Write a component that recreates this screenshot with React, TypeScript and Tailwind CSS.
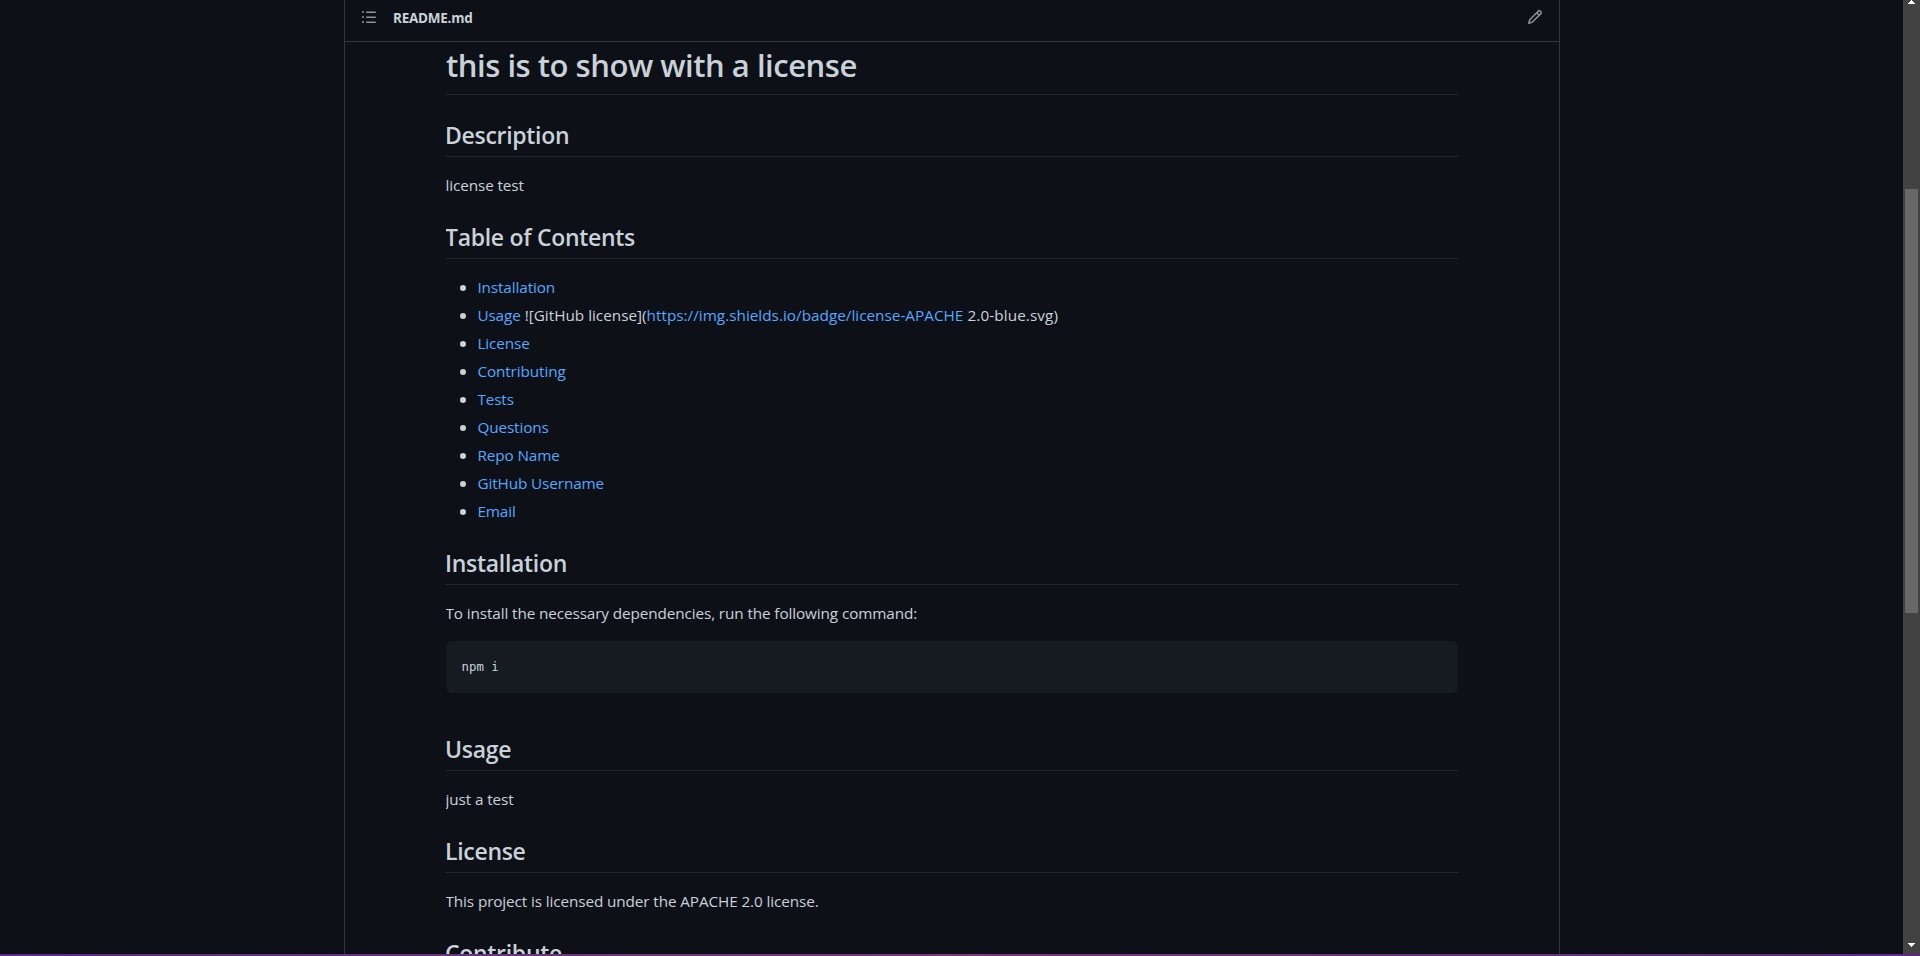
import type { ReactNode } from "react";

function ListIcon() {
  return (
    <svg className="size-4 shrink-0 fill-[#8b949e]" viewBox="0 0 16 16">
      <path d="M5.75 2.5h8.5a.75.75 0 0 1 0 1.5h-8.5a.75.75 0 0 1 0-1.5Zm0 5h8.5a.75.75 0 0 1 0 1.5h-8.5a.75.75 0 0 1 0-1.5Zm0 5h8.5a.75.75 0 0 1 0 1.5h-8.5a.75.75 0 0 1 0-1.5ZM2 14a1 1 0 1 1 0-2 1 1 0 0 1 0 2Zm1-6a1 1 0 1 1-2 0 1 1 0 0 1 2 0ZM2 4a1 1 0 1 1 0-2 1 1 0 0 1 0 2Z" />
    </svg>
  );
}

function PencilIcon() {
  return (
    <svg className="ml-auto size-4 shrink-0 fill-[#8b949e]" viewBox="0 0 16 16">
      <path d="M11.013 1.427a1.75 1.75 0 0 1 2.474 0l1.086 1.086a1.75 1.75 0 0 1 0 2.474l-8.61 8.61c-.21.21-.47.364-.756.445l-3.251.93a.75.75 0 0 1-.927-.928l.929-3.25c.081-.286.235-.547.445-.758l8.61-8.61Zm.176 4.823L9.75 4.81l-6.286 6.287a.253.253 0 0 0-.064.108l-.558 1.953 1.953-.558a.253.253 0 0 0 .108-.064Zm1.238-3.763a.25.25 0 0 0-.354 0L10.811 3.75l1.439 1.44 1.263-1.263a.25.25 0 0 0 0-.354Z" />
    </svg>
  );
}

function Heading({ children, first }: { children: ReactNode; first?: boolean }) {
  return (
    <h2
      className={
        "mb-4 h-[38px] shrink-0 border-b border-[#21262d] text-[23px] leading-[33px] font-semibold tracking-[-0.3px] whitespace-nowrap " +
        (first ? "mt-6" : "mt-2")
      }
    >
      <span className="-ml-px">{children}</span>
    </h2>
  );
}

function Paragraph({ children }: { children: ReactNode }) {
  return <p className="mb-4 -ml-[0.5px] h-6 shrink-0 whitespace-nowrap">{children}</p>;
}

function Item({ children }: { children: ReactNode }) {
  return (
    <li className="flex h-6 items-center whitespace-nowrap">
      <span className="mt-px mr-[11.4px] size-[6px] shrink-0 rounded-full bg-[#c9d1d9]" />
      <span className="whitespace-pre">{children}</span>
    </li>
  );
}

function Link({ children }: { children: ReactNode }) {
  return (
    <a href="#" className="text-[#58a6ff]">
      {children}
    </a>
  );
}

const sectionsAfterUsage = ["License", "Contributing", "Tests", "Questions", "Repo Name", "GitHub Username", "Email"];

export default function App() {
  return (
    <div className="flex h-[956px] w-[1920px] flex-col overflow-hidden bg-[#0d1117] font-['Open_Sans','Noto_Sans',sans-serif] text-[15.3px] leading-6 tracking-[-0.11px] text-[#c9d1d9]">
      <div className="flex min-h-0 flex-1">
        <main className="ml-[344px] flex w-[1216px] flex-col overflow-hidden border-x border-[#30363d]">
          <header className="flex h-[42px] shrink-0 items-center border-b border-[#30363d] px-4 pb-[7px]">
            <ListIcon />
            <span className="mt-[2px] ml-4 text-[13.5px] leading-5 font-bold tracking-[-0.25px]">README.md</span>
            <PencilIcon />
          </header>
          <article className="mx-auto flex min-h-0 w-[1012px] flex-1 flex-col overflow-hidden">
            <h1 className="h-[53px] shrink-0 border-b border-[#21262d] pt-[3px] text-[31px] leading-[40px] font-semibold tracking-[-0.47px] whitespace-nowrap">
              this is to show with a license
            </h1>
            <Heading first>Description</Heading>
            <Paragraph>license test</Paragraph>
            <Heading>Table of Contents</Heading>
            <ul className="mb-4 flex shrink-0 flex-col gap-1 pl-[14px]">
              <Item>
                <Link>Installation</Link>
              </Item>
              <Item>
                <Link>Usage</Link>
                <span className="tracking-[0px]"> ![GitHub license](</span>
                <span className="tracking-[0.01px]">
                  <Link>https://img.shields.io/badge/license-APACHE</Link>
                </span>
                <span className="tracking-[0.1px]"> 2.0-blue.svg)</span>
              </Item>
              {sectionsAfterUsage.map((name) => (
                <Item key={name}>
                  <Link>{name}</Link>
                </Item>
              ))}
            </ul>
            <Heading>Installation</Heading>
            <Paragraph>To install the necessary dependencies, run the following command:</Paragraph>
            <pre className="mb-8 h-[52px] shrink-0 rounded-md bg-[#161b22] py-4 pl-[15.5px] font-['DejaVu_Sans_Mono',monospace] text-[12.4px] leading-5 tracking-normal">
              npm i
            </pre>
            <Heading>Usage</Heading>
            <Paragraph>just a test</Paragraph>
            <Heading>License</Heading>
            <Paragraph>This project is licensed under the APACHE 2.0 license.</Paragraph>
            <Heading>Contribute</Heading>
          </article>
        </main>
        <div className="ml-auto flex w-[17px] flex-col items-center bg-[#424242]">
          <svg className="h-[4px] w-[7px]" viewBox="0 0 7 4" shapeRendering="crispEdges">
            <path d="M3 0h1v1h1v1h1v1h1v1H0V3h1V2h1V1h1z" fill="#fff" />
          </svg>
          <div className="mt-[185px] h-[424px] w-[13px] bg-[#686868]" />
          <svg className="mt-auto mb-[7px] h-[4px] w-[7px]" viewBox="0 0 7 4" shapeRendering="crispEdges">
            <path d="M0 0h7v1H6v1H5v1H4v1H3V3H2V2H1V1H0z" fill="#fff" />
          </svg>
        </div>
      </div>
      <div className="h-[2px] shrink-0 bg-linear-to-r from-[#5b2a80] via-[#7a3a7c] to-[#5b2a80]" />
    </div>
  );
}
